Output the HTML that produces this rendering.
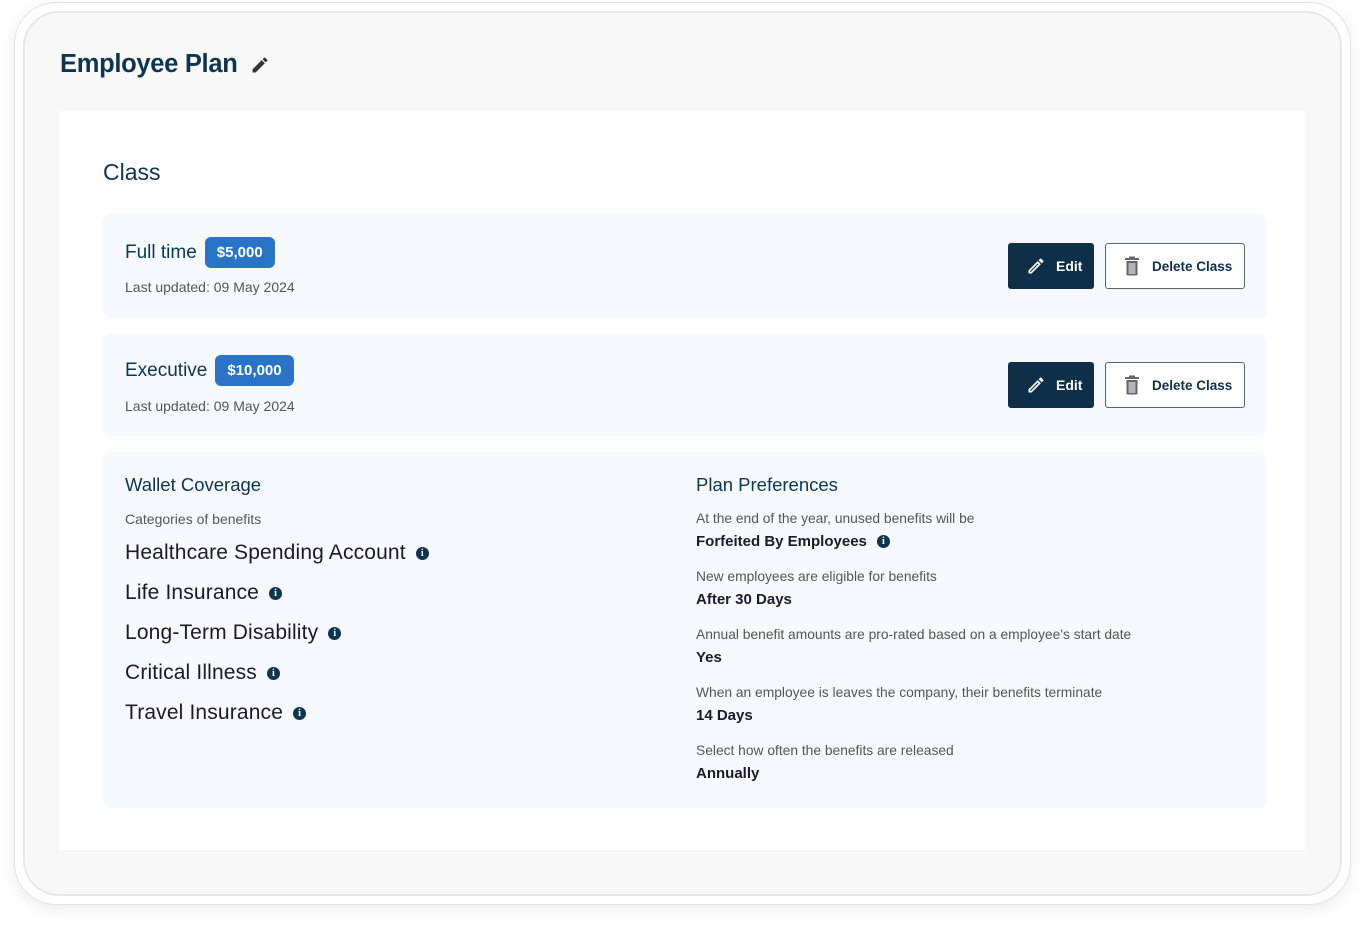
<!DOCTYPE html>
<html><head><meta charset="utf-8"><style>
*{box-sizing:border-box;margin:0;padding:0}
body{width:1365px;height:932px;background:#fff;font-family:"Liberation Sans",sans-serif;position:relative;overflow:hidden;color:#0d2d45}
.outer{position:absolute;left:14px;top:2px;width:1337px;height:903px;border-radius:42px;background:#fff;border:1px solid #e4e4e4;box-shadow:0 4px 14px rgba(0,0,0,0.08)}
.inner{position:absolute;left:23px;top:11px;width:1319px;height:885px;border-radius:36px;background:#f8f8f8;border:2px solid #e8e8e8}
.panel{position:absolute;left:59px;top:111px;width:1247px;height:739px;background:#fff}
h1{position:absolute;left:60px;top:50px;font-size:25.5px;font-weight:bold;color:#0d3550;letter-spacing:-0.3px}
.abs{position:absolute}
.card{position:absolute;left:103px;width:1164px;background:#f6f9fe;border-radius:8px}
.title{font-size:19px;color:#0d3550}
.badge{display:inline-block;background:#2a74c8;color:#fff;font-size:15px;border-radius:6px;padding:0 12px;height:31px;line-height:31px;font-weight:bold}
.sub{font-size:14px;color:#555}
.btn{position:absolute;height:46px;border-radius:3px;font-size:14px;display:flex;align-items:center;font-weight:bold}
.edit{left:905px;width:86px;background:#0f2f48;color:#fff;padding-left:18px;gap:10px}
.del{left:1002px;width:140px;background:#fff;border:1px solid #566;color:#0f2f48;padding-left:18px;gap:12px;font-size:13.5px}
.item{position:absolute;left:22px;font-size:21px;letter-spacing:0.15px;color:#1a1a2a;display:flex;align-items:center;gap:10px}
.i{display:inline-block;width:13px;height:13px;border-radius:50%;background:#0d3550;color:#fff;font-size:10px;line-height:13px;text-align:center;font-weight:bold;font-family:"Liberation Serif",serif;letter-spacing:0}
.lbl{position:absolute;left:593px;font-size:13.8px;color:#555}
.val{position:absolute;left:593px;font-size:15px;font-weight:bold;color:#1a1a2a;display:flex;align-items:center;gap:10px}
</style></head><body>
<div class="outer"></div>
<div class="inner"></div>
<div class="panel"></div>
<h1>Employee Plan</h1>
<svg class="abs" style="left:250px;top:55px" width="20" height="20" viewBox="0 0 24 24"><path d="M3 17.25V21h3.75L17.81 9.94l-3.75-3.75L3 17.25zM20.71 7.04a1 1 0 000-1.41l-2.34-2.34a1 1 0 00-1.41 0l-1.83 1.83 3.75 3.75 1.83-1.83z" fill="#333"/></svg>
<div class="abs" style="left:103px;top:159px;font-size:23px;color:#0d3550">Class</div>

<div class="card" style="top:214px;height:104px">
  <div class="abs" style="left:22px;top:23px;display:flex;align-items:center;gap:8px"><span class="title">Full time</span><span class="badge">$5,000</span></div>
  <div class="abs sub" style="left:22px;top:65px">Last updated: 09 May 2024</div>
  <div class="btn edit" style="top:29px"><svg width="20" height="20" viewBox="0 0 24 24"><path d="M3 17.25V21h3.75L17.81 9.94l-3.75-3.75L3 17.25zM5.9 19H5v-.9l9.06-9.06.9.9L5.9 19zM20.71 7.04a1 1 0 000-1.41l-2.34-2.34a1 1 0 00-1.41 0l-1.83 1.83 3.75 3.75 1.83-1.83z" fill="#fff"/></svg>Edit</div>
  <div class="btn del" style="top:29px"><svg width="16" height="20" viewBox="0 0 16 20"><rect x="1" y="2" width="14" height="2" fill="#666"/><rect x="5" y="0.5" width="6" height="2" fill="#666"/><path d="M2.5 5h11v13a1.5 1.5 0 01-1.5 1.5H4A1.5 1.5 0 012.5 18z" fill="#666"/><rect x="4.5" y="7" width="7" height="11" fill="#b0b6be"/></svg>Delete Class</div>
</div>

<div class="card" style="top:333px;height:103px">
  <div class="abs" style="left:22px;top:22px;display:flex;align-items:center;gap:8px"><span class="title">Executive</span><span class="badge">$10,000</span></div>
  <div class="abs sub" style="left:22px;top:65px">Last updated: 09 May 2024</div>
  <div class="btn edit" style="top:29px"><svg width="20" height="20" viewBox="0 0 24 24"><path d="M3 17.25V21h3.75L17.81 9.94l-3.75-3.75L3 17.25zM5.9 19H5v-.9l9.06-9.06.9.9L5.9 19zM20.71 7.04a1 1 0 000-1.41l-2.34-2.34a1 1 0 00-1.41 0l-1.83 1.83 3.75 3.75 1.83-1.83z" fill="#fff"/></svg>Edit</div>
  <div class="btn del" style="top:29px"><svg width="16" height="20" viewBox="0 0 16 20"><rect x="1" y="2" width="14" height="2" fill="#666"/><rect x="5" y="0.5" width="6" height="2" fill="#666"/><path d="M2.5 5h11v13a1.5 1.5 0 01-1.5 1.5H4A1.5 1.5 0 012.5 18z" fill="#666"/><rect x="4.5" y="7" width="7" height="11" fill="#b0b6be"/></svg>Delete Class</div>
</div>

<div class="card" style="top:452px;height:356px">
  <div class="abs title" style="left:22px;top:22px;font-size:18.5px">Wallet Coverage</div>
  <div class="abs sub" style="left:22px;top:59px">Categories of benefits</div>
  <div class="item" style="top:89px">Healthcare Spending Account <span class="i">i</span></div>
  <div class="item" style="top:129px">Life Insurance <span class="i">i</span></div>
  <div class="item" style="top:169px">Long-Term Disability <span class="i">i</span></div>
  <div class="item" style="top:209px">Critical Illness <span class="i">i</span></div>
  <div class="item" style="top:249px">Travel Insurance <span class="i">i</span></div>

  <div class="abs title" style="left:593px;top:22px;font-size:18.5px">Plan Preferences</div>
  <div class="lbl" style="top:59px">At the end of the year, unused benefits will be</div>
  <div class="val" style="top:81px">Forfeited By Employees <span class="i">i</span></div>
  <div class="lbl" style="top:117px">New employees are eligible for benefits</div>
  <div class="val" style="top:139px">After 30 Days</div>
  <div class="lbl" style="top:175px">Annual benefit amounts are pro-rated based on a employee's start date</div>
  <div class="val" style="top:197px">Yes</div>
  <div class="lbl" style="top:233px">When an employee is leaves the company, their benefits terminate</div>
  <div class="val" style="top:255px">14 Days</div>
  <div class="lbl" style="top:291px">Select how often the benefits are released</div>
  <div class="val" style="top:313px">Annually</div>
</div>
</body></html>
